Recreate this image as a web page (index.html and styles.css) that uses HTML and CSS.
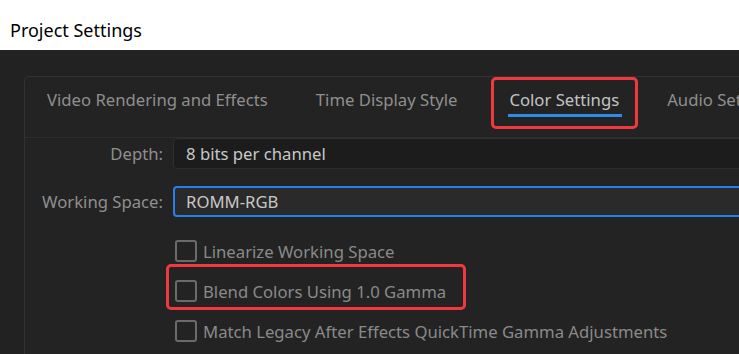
FILE: index.html
```html
<!DOCTYPE html>
<html lang="en">
<head>
    <meta charset="UTF-8">
    <title>Project Settings</title>
    <link rel="stylesheet" href="styles.css">
</head>
<body>
    <div class="titlebar">Project Settings</div>

    <div class="workspace">
        <div class="panel">
            <div class="tabs">
                <div class="tab">Video Rendering and Effects</div>
                <div class="tab">Time Display Style</div>
                <div class="tab active marked">Color Settings</div>
                <div class="tab">Audio Settings</div>
            </div>

            <div class="form">
                <div class="row">
                    <div class="label">Depth:</div>
                    <div class="select">8 bits per channel</div>
                </div>
                <div class="row">
                    <div class="label">Working Space:</div>
                    <div class="select focused">ROMM-RGB</div>
                </div>

                <div class="checks">
                    <div class="check"><span class="box"></span>Linearize Working Space</div>
                    <div class="check marked-row"><span class="box"></span>Blend Colors Using 1.0 Gamma</div>
                    <div class="check"><span class="box"></span>Match Legacy After Effects QuickTime Gamma Adjustments</div>
                </div>
            </div>
        </div>
    </div>
</body>
</html>
```

FILE: styles.css
```css
/* Dialog look, dark theme */
body {
    margin: 0;
    background-color: #222222;
    font-family: 'Noto Sans', 'Open Sans', sans-serif;
    overflow: hidden;
}

.titlebar {
    height: 50px;
    background-color: #ffffff;
    color: #000000;
    font-size: 18px;
    padding-left: 10px;
    line-height: 60px;
    box-sizing: border-box;
}

.workspace {
    height: 304px;
    overflow: hidden;
    padding: 26px 0 0 24px;
    box-sizing: border-box;
}

.panel {
    margin-right: -40px;
    height: 300px;
    border-top: 1px solid #323232;
    border-left: 1px solid #323232;
    border-top-left-radius: 5px;
    background-color: #232323;
}

.tabs {
    display: flex;
    gap: 48px;
    height: 60px;
    padding-left: 22px;
    border-bottom: 1px solid #2d2d2d;
    font-size: 16.7px;
    color: #8f8f8f;
}

.tab {
    position: relative;
    padding-top: 11px;
    white-space: nowrap;
}

.tab.active {
    margin-left: 4px;
    color: #c4c4c4;
}

.tab.active::after {
    content: "";
    position: absolute;
    left: -1px;
    right: -3px;
    top: 37px;
    height: 3px;
    background-color: #2d8ceb;
}

.marked::before {
    content: "";
    position: absolute;
    left: -18px;
    right: -19px;
    top: 0;
    height: 52px;
    border: 3px solid #f0393f;
    border-radius: 5px;
    box-sizing: border-box;
}

.row {
    display: flex;
    align-items: center;
    margin-bottom: 17px;
    font-size: 16.7px;
}

.label {
    width: 138px;
    text-align: right;
    color: #8f8f8f;
    margin-right: 10px;
}

.select {
    flex: 1;
    height: 31px;
    box-sizing: border-box;
    background-color: #1c1c1c;
    border: 1px solid #2e2e2e;
    border-radius: 4px;
    padding-left: 12px;
    line-height: 29px;
    color: #c8c8c8;
}

.select.focused {
    background-color: #2a2a2a;
    border: 2px solid #2680eb;
    padding-left: 11px;
    line-height: 27px;
}

.checks {
    padding-left: 150px;
    margin-top: -3px;
}

.check {
    position: relative;
    display: flex;
    align-items: center;
    height: 40px;
    font-size: 16.7px;
    color: #8a8a8a;
    white-space: nowrap;
}

.box {
    width: 22px;
    height: 22px;
    box-sizing: border-box;
    border: 2px solid #6b6b6b;
    border-radius: 3px;
    margin-right: 6px;
}

.marked-row::before {
    content: "";
    position: absolute;
    left: -9px;
    width: 300px;
    top: -7px;
    height: 46px;
    border: 3px solid #f0393f;
    border-radius: 5px;
    box-sizing: border-box;
}
```
